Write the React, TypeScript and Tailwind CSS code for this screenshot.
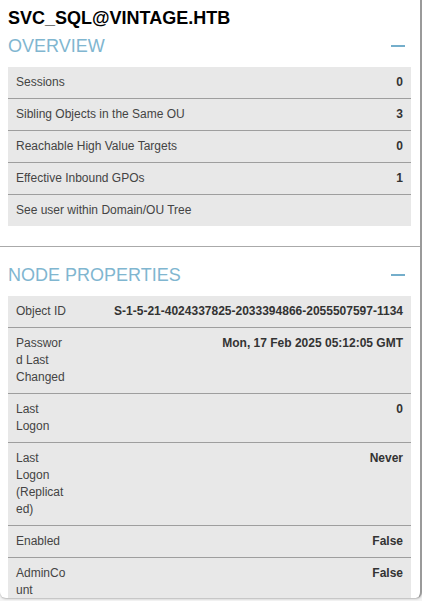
import React from "react";

const OVERVIEW = [
  { label: "Sessions", value: "0" },
  { label: "Sibling Objects in the Same OU", value: "3" },
  { label: "Reachable High Value Targets", value: "0" },
  { label: "Effective Inbound GPOs", value: "1" },
  { label: "See user within Domain/OU Tree", value: "" },
];

const PROPS = [
  { label: "Object ID", value: "S-1-5-21-4024337825-2033394866-2055507597-1134" },
  { label: "Password Last Changed", value: "Mon, 17 Feb 2025 05:12:05 GMT" },
  { label: "Last Logon", value: "0" },
  { label: "Last Logon (Replicated)", value: "Never" },
  { label: "Enabled", value: "False" },
  { label: "AdminCount", value: "False" },
];

function Heading({ children }: { children: React.ReactNode }) {
  return (
    <div className="flex items-center justify-between leading-[20px]">
      <span className="text-[18px] text-[#80b6d0]">{children}</span>
      <span className="mr-[6px] h-[2px] w-[14px] bg-[#74aecb]" />
    </div>
  );
}

export default function App() {
  return (
    <div className="h-[601px] w-[422px] bg-[#f4f4f4] font-['Liberation_Sans',Arial,sans-serif]">
      <div className="relative h-[598px] overflow-hidden rounded-b-[6px] border-r-2 border-[#9a9a9a] bg-white shadow-[0_1px_2px_rgba(0,0,0,0.25)]">
        {/* scrollbar thumb over the border */}
        <div className="absolute right-[-2px] top-0 h-[157px] w-[2px] bg-[#7fbcc9]" />

        <div className="border-b border-[#aaa] pb-5 pl-2 pr-[9px] pt-2">
          <div className="text-[18px] font-bold leading-[20px] text-black">
            SVC_SQL@VINTAGE.HTB
          </div>
          <div className="mt-2">
            <Heading>OVERVIEW</Heading>
          </div>
          <div className="mt-[11px] bg-[#e8e8e8] text-[12px] leading-[17px]">
            {OVERVIEW.map((row, i) => (
              <div
                key={row.label}
                className={
                  "flex justify-between px-2 py-[7px] " +
                  (i > 0 ? "border-t border-[#9e9e9e]" : "")
                }
              >
                <span className="text-[#444]">{row.label}</span>
                <span className="font-bold text-[#333]">{row.value}</span>
              </div>
            ))}
          </div>
        </div>

        <div className="pl-2 pr-[9px] pt-[18px]">
          <Heading>NODE PROPERTIES</Heading>
          <div className="mt-[11px] bg-[#e8e8e8] text-[12px] leading-[17px]">
            {PROPS.map((row, i) => (
              <div
                key={row.label}
                className={
                  "flex gap-2 px-2 py-[7px] " +
                  (i > 0 ? "border-t border-[#9e9e9e]" : "")
                }
              >
                <span className="w-[51px] shrink-0 break-words text-[#444]">{row.label}</span>
                <span className="flex-1 text-right font-bold text-[#333]">{row.value}</span>
              </div>
            ))}
          </div>
        </div>
      </div>
    </div>
  );
}
